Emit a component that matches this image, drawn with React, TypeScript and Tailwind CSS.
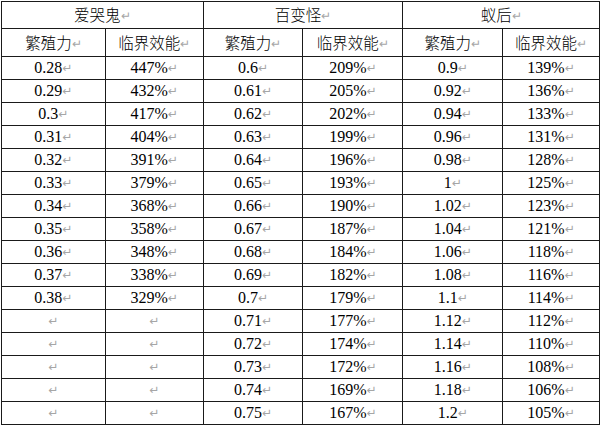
import React from 'react';

const groups = ['爱哭鬼', '百变怪', '蚁后'];

const rows: string[][] = [
  ['0.28', '447%', '0.6', '209%', '0.9', '139%'],
  ['0.29', '432%', '0.61', '205%', '0.92', '136%'],
  ['0.3', '417%', '0.62', '202%', '0.94', '133%'],
  ['0.31', '404%', '0.63', '199%', '0.96', '131%'],
  ['0.32', '391%', '0.64', '196%', '0.98', '128%'],
  ['0.33', '379%', '0.65', '193%', '1', '125%'],
  ['0.34', '368%', '0.66', '190%', '1.02', '123%'],
  ['0.35', '358%', '0.67', '187%', '1.04', '121%'],
  ['0.36', '348%', '0.68', '184%', '1.06', '118%'],
  ['0.37', '338%', '0.69', '182%', '1.08', '116%'],
  ['0.38', '329%', '0.7', '179%', '1.1', '114%'],
  ['', '', '0.71', '177%', '1.12', '112%'],
  ['', '', '0.72', '174%', '1.14', '110%'],
  ['', '', '0.73', '172%', '1.16', '108%'],
  ['', '', '0.74', '169%', '1.18', '106%'],
  ['', '', '0.75', '167%', '1.2', '105%'],
];

const widths = ['w-[104px]', 'w-[98px]', 'w-[100px]', 'w-[100px]', 'w-[100px]', 'w-[97px]'];

const Mark = () => (
  <span className="text-[12px] text-[#a6a6a6] font-['DejaVu_Sans',sans-serif] align-[1px]">↵</span>
);

const Cell = ({
  children,
  className = '',
  span,
}: {
  children?: React.ReactNode;
  className?: string;
  span?: number;
}) => (
  <td colSpan={span} className={`border border-[#1a1a1a] p-0 text-center leading-none ${className}`}>
    {children}
    <Mark />
  </td>
);

const cjk = "font-['Noto_Sans_CJK_SC',sans-serif] font-light text-[15.5px]";

const App = () => {
  return (
    <div className="w-[600px] h-[427px] bg-white pl-px pt-px overflow-hidden">
      <table className="border-collapse table-fixed text-black text-[16px] font-['Liberation_Serif','Noto_Sans_CJK_SC',serif]">
        <colgroup>
          {widths.map((w, i) => (
            <col key={i} className={w} />
          ))}
        </colgroup>
        <thead>
          <tr className="h-[27px]">
            {groups.map((g) => (
              <Cell key={g} span={2} className={cjk}>
                {g}
              </Cell>
            ))}
          </tr>
          <tr className="h-[28px]">
            {groups.map((g) => (
              <React.Fragment key={g}>
                <Cell className={cjk}>繁殖力</Cell>
                <Cell className={cjk}>临界效能</Cell>
              </React.Fragment>
            ))}
          </tr>
        </thead>
        <tbody>
          {rows.map((r, i) => (
            <tr key={i} className="h-[23px]">
              {r.map((v, j) => (
                <Cell key={j}>{v}</Cell>
              ))}
            </tr>
          ))}
        </tbody>
      </table>
    </div>
  );
};

export default App;
